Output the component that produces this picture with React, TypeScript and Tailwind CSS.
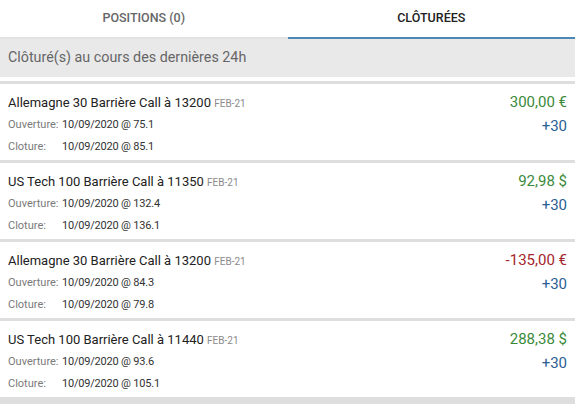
import React from 'react'

interface Trade { name: string; expiry: string; open: string; close: string; pnl: string; positive: boolean; qty: string }

const trades: Trade[] = [
  { name: 'Allemagne 30 Barrière Call à 13200', expiry: 'FEB-21', open: '10/09/2020 @ 75.1', close: '10/09/2020 @ 85.1', pnl: '300,00 €', positive: true, qty: '+30' },
  { name: 'US Tech 100 Barrière Call à 11350', expiry: 'FEB-21', open: '10/09/2020 @ 132.4', close: '10/09/2020 @ 136.1', pnl: '92,98 $', positive: true, qty: '+30' },
  { name: 'Allemagne 30 Barrière Call à 13200', expiry: 'FEB-21', open: '10/09/2020 @ 84.3', close: '10/09/2020 @ 79.8', pnl: '-135,00 €', positive: false, qty: '+30' },
  { name: 'US Tech 100 Barrière Call à 11440', expiry: 'FEB-21', open: '10/09/2020 @ 93.6', close: '10/09/2020 @ 105.1', pnl: '288,38 $', positive: true, qty: '+30' },
]

function TradeRow({ t }: { t: Trade }) {
  return (
    <div className="h-[76px] bg-white flex justify-between px-2 shrink-0">
      <div className="pt-2">
        <p className="h-[22px] leading-[22px] text-[13px] text-[#222]">
          {t.name} <span className="text-[10px] text-[#8a8a8a]">{t.expiry}</span>
        </p>
        <div className="h-[22px] leading-[22px] flex text-[11px]">
          <span className="w-[54px] text-[#7a7a7a]">Ouverture:</span>
          <span className="text-[#333] tracking-[-0.2px]">{t.open}</span>
        </div>
        <div className="h-[22px] leading-[22px] flex text-[11px]">
          <span className="w-[54px] text-[#7a7a7a]">Cloture:</span>
          <span className="text-[#333] tracking-[-0.2px]">{t.close}</span>
        </div>
      </div>
      <div className="pt-[6px] text-right text-[15px] leading-[24px]">
        <p className={t.positive ? 'text-[#3b8a3b]' : 'text-[#a3262b]'}>{t.pnl}</p>
        <p className="text-[#2b5f95]">{t.qty}</p>
      </div>
    </div>
  )
}

export default function App() {
  return (
    <div className="w-[575px] h-[404px] overflow-hidden bg-[#dedede] flex flex-col" style={{ fontFamily: 'Roboto, "Liberation Sans", sans-serif' }}>
      <div className="h-[39px] bg-white flex shrink-0">
        <div className="flex-1 flex items-center justify-center text-[12.5px] font-medium text-[#666] border-b-2 border-[#e2e2e2]">
          POSITIONS (0)
        </div>
        <div className="flex-1 flex items-center justify-center text-[12.5px] font-medium text-[#222] border-b-2 border-[#4d87b6]">
          CLÔTURÉES
        </div>
      </div>
      <div className="h-[38px] bg-[#e9e9ea] flex items-center px-2 text-[14.3px] text-[#666] shrink-0">
        Clôturé(s) au cours des dernières 24h
      </div>
      <div className="h-[4px] bg-white shrink-0" />
      <div className="flex flex-col gap-[3px] pt-[3px]">
        {trades.map((t, i) => <TradeRow key={i} t={t} />)}
      </div>
    </div>
  )
}
